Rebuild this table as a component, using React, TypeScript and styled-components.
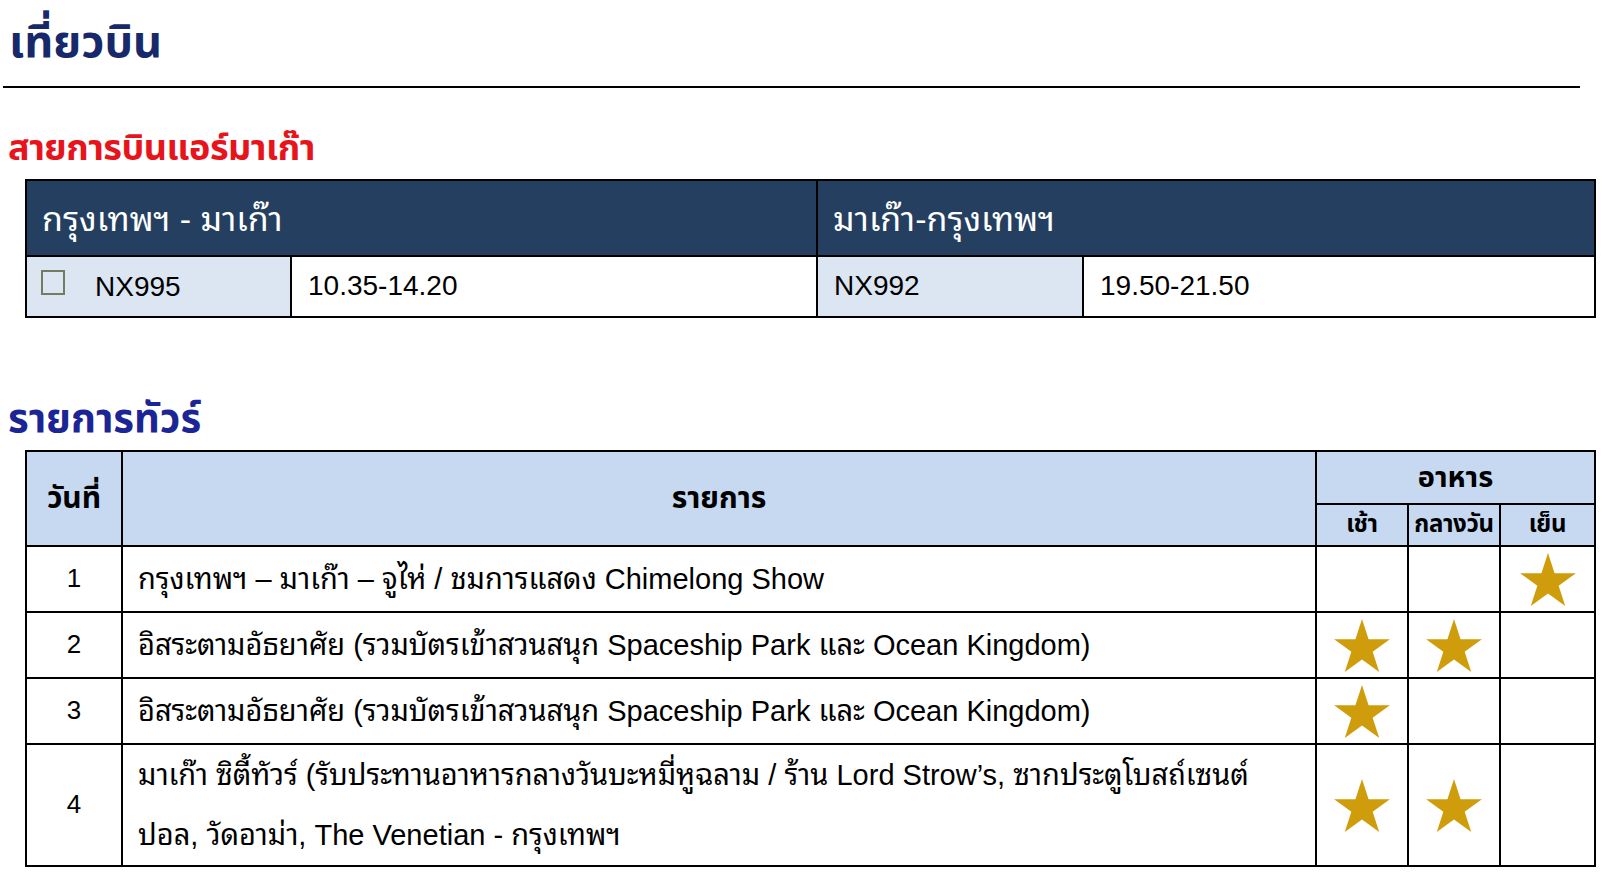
import { FC } from "react";
import styled, { createGlobalStyle } from "styled-components";

const thaiHead = `"Noto Sans Thai", "Kanit", "Prompt", "Loma", "Garuda", "Liberation Sans", sans-serif`;
const thaiBody = `"Liberation Sans", "Noto Sans Thai Looped", "Norasi", "Kinnari", sans-serif`;

const GlobalStyle = createGlobalStyle`
  html, body {
    margin: 0;
    padding: 0;
    background: #fff;
  }
  body {
    font-family: ${thaiBody};
    color: #000;
  }
`;

type Meal = [boolean, boolean, boolean];

const tourDays: { day: number; lines: string[]; meals: Meal }[] = [
  {
    day: 1,
    lines: ["กรุงเทพฯ – มาเก๊า – จูไห่ / ชมการแสดง Chimelong Show"],
    meals: [false, false, true],
  },
  {
    day: 2,
    lines: [
      "อิสระตามอัธยาศัย (รวมบัตรเข้าสวนสนุก Spaceship Park และ Ocean Kingdom)",
    ],
    meals: [true, true, false],
  },
  {
    day: 3,
    lines: [
      "อิสระตามอัธยาศัย (รวมบัตรเข้าสวนสนุก Spaceship Park และ Ocean Kingdom)",
    ],
    meals: [true, false, false],
  },
  {
    day: 4,
    lines: [
      "มาเก๊า ซิตี้ทัวร์ (รับประทานอาหารกลางวันบะหมี่หูฉลาม / ร้าน Lord Strow’s, ซากประตูโบสถ์เซนต์",
      "ปอล, วัดอาม่า, The Venetian - กรุงเทพฯ",
    ],
    meals: [true, true, false],
  },
];

const Star: FC = () => (
  <StarIcon viewBox="0 0 100 95" aria-hidden>
    <polygon points="50,0 61.8,36.3 100,36.3 69.1,58.8 80.9,95 50,72.6 19.1,95 30.9,58.8 0,36.3 38.2,36.3" />
  </StarIcon>
);

const App: FC = () => {
  return (
    <Page>
      <GlobalStyle />
      <Title>เที่ยวบิน</Title>
      <Rule />

      <SectionTitle tone="red">สายการบินแอร์มาเก๊า</SectionTitle>
      <FlightTable>
        <colgroup>
          <col style={{ width: 265 }} />
          <col style={{ width: 526 }} />
          <col style={{ width: 266 }} />
          <col style={{ width: 512 }} />
        </colgroup>
        <thead>
          <tr>
            <RouteHead colSpan={2}>กรุงเทพฯ - มาเก๊า</RouteHead>
            <RouteHead colSpan={2}>มาเก๊า-กรุงเทพฯ</RouteHead>
          </tr>
        </thead>
        <tbody>
          <tr>
            <FlightCell shaded first>
              <CheckBox />
              <FlightCode>NX995</FlightCode>
            </FlightCell>
            <FlightCell>10.35-14.20</FlightCell>
            <FlightCell shaded>NX992</FlightCell>
            <FlightCell>19.50-21.50</FlightCell>
          </tr>
        </tbody>
      </FlightTable>

      <SectionTitle tone="blue">รายการทัวร์</SectionTitle>
      <TourTable>
        <colgroup>
          <col style={{ width: 96 }} />
          <col style={{ width: 1194 }} />
          <col style={{ width: 92 }} />
          <col style={{ width: 92 }} />
          <col style={{ width: 95 }} />
        </colgroup>
        <thead>
          <tr>
            <HeadCell rowSpan={2}>วันที่</HeadCell>
            <HeadCell rowSpan={2}>รายการ</HeadCell>
            <HeadCell colSpan={3} tall>
              อาหาร
            </HeadCell>
          </tr>
          <tr>
            <SubHeadCell>เช้า</SubHeadCell>
            <SubHeadCell>กลางวัน</SubHeadCell>
            <SubHeadCell>เย็น</SubHeadCell>
          </tr>
        </thead>
        <tbody>
          {tourDays.map((d) => (
            <DayRow key={d.day} tall={d.lines.length > 1}>
              <DayNumber>{d.day}</DayNumber>
              <Programme>
                {d.lines.map((l) => (
                  <div key={l}>{l}</div>
                ))}
              </Programme>
              {d.meals.map((m, i) => (
                <MealCell key={i}>{m && <Star />}</MealCell>
              ))}
            </DayRow>
          ))}
        </tbody>
      </TourTable>
    </Page>
  );
};

export default App;

const Page = styled.div`
  width: 1609px;
  min-height: 879px;
  box-sizing: border-box;
`;

const Title = styled.h1`
  margin: 0;
  height: 86px;
  box-sizing: border-box;
  padding: 12px 0 0 9px;
  font-family: ${thaiHead};
  font-size: 45px;
  line-height: 62px;
  font-weight: 700;
  color: #17286b;
`;

const Rule = styled.hr`
  margin: 0 0 0 3px;
  width: 1577px;
  height: 0;
  border: 0;
  border-top: 2px solid #000;
`;

const SectionTitle = styled.h2<{ tone: "red" | "blue" }>`
  margin: 0;
  display: flex;
  align-items: flex-end;
  box-sizing: border-box;
  padding: 0 0 4px 8px;
  height: ${({ tone }) => (tone === "red" ? "91px" : "132px")};
  font-family: ${thaiHead};
  font-size: ${({ tone }) => (tone === "red" ? "36px" : "40px")};
  line-height: 52px;
  font-weight: 700;
  letter-spacing: ${({ tone }) => (tone === "red" ? "-0.5px" : "0")};
  color: ${({ tone }) => (tone === "red" ? "#e8141b" : "#1c2595")};
`;

const FlightTable = styled.table`
  margin-left: 25px;
  width: 1569px;
  table-layout: fixed;
  border-collapse: collapse;
  border: 2px solid #000;
`;

const RouteHead = styled.th`
  height: 68px;
  padding: 0 0 6px 15px;
  text-align: left;
  font-weight: 400;
  font-size: 34px;
  color: #fff;
  background: #243f60;
  border: 2px solid #000;
`;

const FlightCell = styled.td<{ shaded?: boolean; first?: boolean }>`
  height: 57px;
  padding: 0 0 2px ${({ first }) => (first ? "14px" : "16px")};
  font-size: 28px;
  background: ${({ shaded }) => (shaded ? "#dce6f2" : "#fff")};
  border: 2px solid #000;
  white-space: nowrap;
`;

const CheckBox = styled.span`
  display: inline-block;
  vertical-align: middle;
  width: 24px;
  height: 25px;
  box-sizing: border-box;
  border: 2px solid #737c63;
  margin: -8px 30px 0 0;
`;

const FlightCode = styled.span`
  vertical-align: middle;
`;

const TourTable = styled.table`
  margin-left: 25px;
  width: 1569px;
  table-layout: fixed;
  border-collapse: collapse;
  border: 2px solid #000;
`;

const HeadCell = styled.th<{ tall?: boolean }>`
  height: ${({ tall }) => (tall ? "51px" : "auto")};
  padding: 0;
  text-align: center;
  font-family: ${thaiHead};
  font-size: ${({ tall }) => (tall ? "29px" : "30px")};
  font-weight: 700;
  background: #c6d9f1;
  border: 2px solid #000;
`;

const SubHeadCell = styled.th`
  height: 40px;
  padding: 0;
  text-align: center;
  font-family: ${thaiHead};
  font-size: 24px;
  font-weight: 700;
  letter-spacing: -0.3px;
  background: #c6d9f1;
  border: 2px solid #000;
  white-space: nowrap;
`;

const DayRow = styled.tr<{ tall?: boolean }>`
  height: ${({ tall }) => (tall ? "122px" : "66px")};
`;

const DayNumber = styled.td`
  padding: 0 0 1px;
  text-align: center;
  font-size: 26px;
  border: 2px solid #000;
`;

const Programme = styled.td`
  padding: 0 0 0 15px;
  font-size: 29px;
  line-height: 60px;
  border: 2px solid #000;
  white-space: nowrap;
`;

const MealCell = styled.td`
  padding: 4px 0 0;
  text-align: center;
  vertical-align: middle;
  border: 2px solid #000;
`;

const StarIcon = styled.svg`
  display: inline-block;
  width: 56px;
  height: 53px;
  fill: #cf9d0c;
`;
